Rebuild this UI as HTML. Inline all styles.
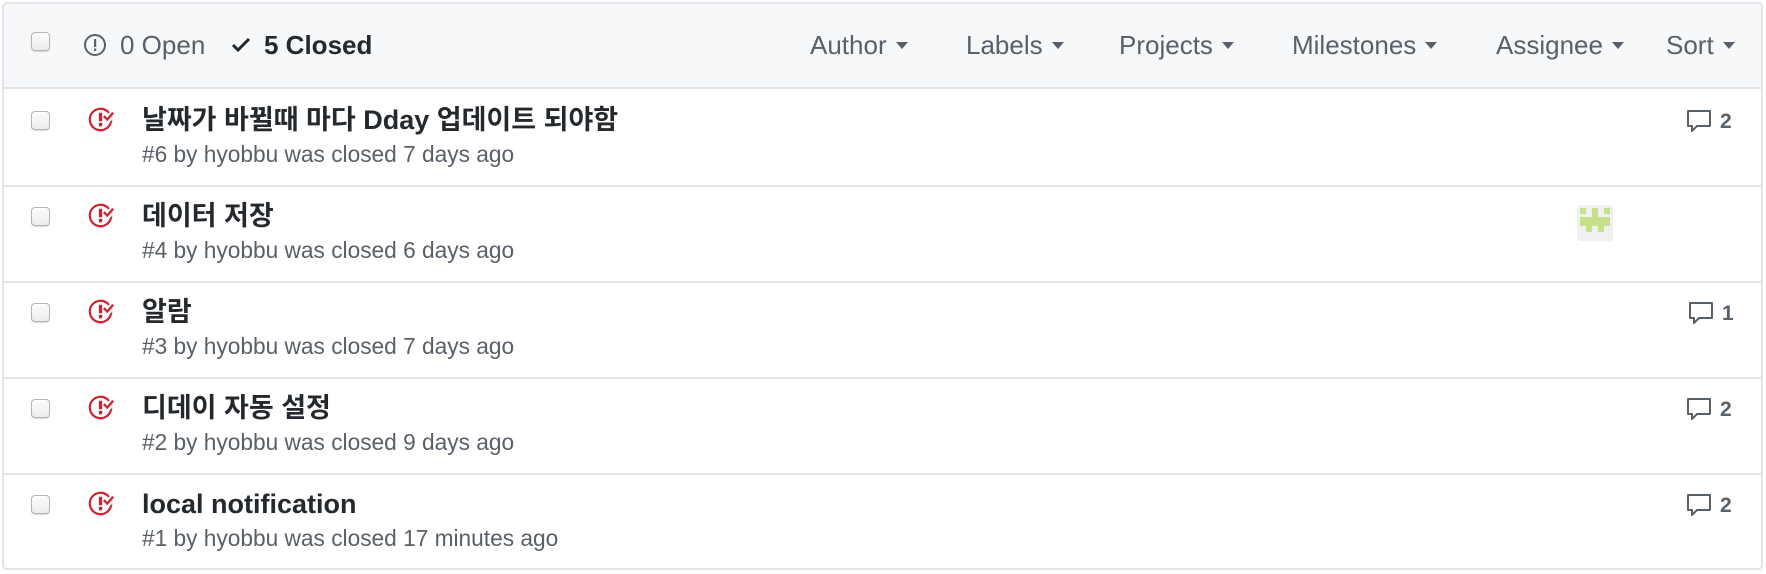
<!DOCTYPE html>
<html><head><meta charset="utf-8"><style>
*{box-sizing:border-box;margin:0;padding:0}
body{width:1766px;height:574px;background:#fff;font-family:"Liberation Sans","Noto Sans CJK KR",sans-serif;color:#24292e;overflow:hidden}
.box{position:absolute;left:2px;top:2px;width:1761px;height:568px;border:2px solid #e1e4e8;border-radius:5px;overflow:hidden}
.hdr{position:absolute;left:0;top:0;right:0;height:85px;background:#f6f8fa;border-bottom:2px solid #e1e4e8}
.cb{position:absolute;width:19px;height:19px;border:1px solid #b5b5b5;border-radius:4px;background:linear-gradient(#fdfdfd,#ececec);box-shadow:0 1px 1px rgba(0,0,0,.15)}
.t{position:absolute;white-space:nowrap}
.f{font-size:26px;line-height:30px;color:#586069}
.f:after{content:"";display:inline-block;margin-left:9px;vertical-align:middle;border:6px solid transparent;border-top:7px solid #586069;border-bottom:0;position:relative;top:-2px}
.row{position:absolute;left:0;right:0;height:96px;border-bottom:2px solid #e1e4e8}
.title{font-size:27px;line-height:30px;font-weight:bold;left:138px;top:14px}
.meta{font-size:22.7px;line-height:26px;color:#586069;left:138px;top:50px}
.ic{position:absolute;left:83px;top:15px}
.cm{position:absolute;top:18px;left:1682px;font-size:21px;line-height:26px;font-weight:bold;color:#586069}
.cm svg{vertical-align:-5px;margin-right:8px}
</style></head><body>
<div class="box">
<div class="hdr">
 <div class="cb" style="left:27px;top:28px"></div>
 <svg style="position:absolute;left:79px;top:29px" width="24" height="24" viewBox="0 0 24 24"><circle cx="12" cy="12" r="10" fill="none" stroke="#586069" stroke-width="2"/><rect x="11" y="6" width="2.2" height="8" fill="#586069"/><rect x="11" y="15.5" width="2.2" height="2.4" fill="#586069"/></svg>
 <div class="t" style="left:116px;top:26px;font-size:26px;line-height:30px;color:#586069">0 Open</div>
 <svg style="position:absolute;left:227px;top:32px" width="20" height="18" viewBox="0 0 20 18"><path d="M2 9l5 5L18 3" fill="none" stroke="#24292e" stroke-width="3"/></svg>
 <div class="t" style="left:260px;top:26px;font-size:26px;line-height:30px;font-weight:bold">5 Closed</div>
 <div class="t f" style="left:806px;top:26px">Author</div>
 <div class="t f" style="left:962px;top:26px">Labels</div>
 <div class="t f" style="left:1115px;top:26px">Projects</div>
 <div class="t f" style="left:1288px;top:26px">Milestones</div>
 <div class="t f" style="left:1492px;top:26px">Assignee</div>
 <div class="t f" style="left:1662px;top:26px">Sort</div>
</div>

<div class="row" style="top:87px">
 <div class="cb" style="left:27px;top:20px"></div>
 <svg class="ic" width="27" height="27" viewBox="0 0 16 16"><path fill="#cb2431" d="M7 10h2v2H7v-2zm2-6H7v5h2V4zm1.5 1.5l-1 1L12 9l4-4.5-1-1L12 7l-1.5-1.5zM8 13.7A5.710 5.710 0 0 1 2.3 8c0-3.14 2.56-5.7 5.7-5.7 1.83 0 3.45.88 4.5 2.2l.92-.92A6.947 6.947 0 0 0 8 1C4.14 1 1 4.14 1 8s3.14 7 7 7 7-3.14 7-7l-1.52 1.52c-.66 2.41-2.86 4.19-5.48 4.19v-.01z"/></svg>
 <div class="t title">날짜가 바뀔때 마다 Dday 업데이트 되야함</div>
 <div class="t meta">#6 by hyobbu was closed 7 days ago</div>
 <div class="cm"><svg width="26" height="24" viewBox="0 0 26 24"><path d="M2 2h22v15H11l-5 5v-5H2z" fill="none" stroke="#586069" stroke-width="2" stroke-linejoin="round"/></svg>2</div>
</div>

<div class="row" style="top:183px">
 <div class="cb" style="left:27px;top:20px"></div>
 <svg class="ic" width="27" height="27" viewBox="0 0 16 16"><path fill="#cb2431" d="M7 10h2v2H7v-2zm2-6H7v5h2V4zm1.5 1.5l-1 1L12 9l4-4.5-1-1L12 7l-1.5-1.5zM8 13.7A5.710 5.710 0 0 1 2.3 8c0-3.14 2.56-5.7 5.7-5.7 1.83 0 3.45.88 4.5 2.2l.92-.92A6.947 6.947 0 0 0 8 1C4.14 1 1 4.14 1 8s3.14 7 7 7 7-3.14 7-7l-1.52 1.52c-.66 2.41-2.86 4.19-5.48 4.19v-.01z"/></svg>
 <div class="t title">데이터 저장</div>
 <div class="t meta">#4 by hyobbu was closed 6 days ago</div>
 <svg style="position:absolute;left:1573px;top:18px" width="36" height="36" viewBox="0 0 36 36"><rect width="36" height="36" rx="3" fill="#f0f0f0"/><g fill="#c6e08a"><rect x="3" y="3" width="6" height="6"/><rect x="27" y="3" width="6" height="6"/><rect x="15" y="3" width="6" height="9"/><rect x="3" y="12" width="30" height="9"/><rect x="9" y="21" width="6" height="6"/><rect x="21" y="21" width="6" height="6"/></g></svg>
</div>

<div class="row" style="top:279px">
 <div class="cb" style="left:27px;top:20px"></div>
 <svg class="ic" width="27" height="27" viewBox="0 0 16 16"><path fill="#cb2431" d="M7 10h2v2H7v-2zm2-6H7v5h2V4zm1.5 1.5l-1 1L12 9l4-4.5-1-1L12 7l-1.5-1.5zM8 13.7A5.710 5.710 0 0 1 2.3 8c0-3.14 2.56-5.7 5.7-5.7 1.83 0 3.45.88 4.5 2.2l.92-.92A6.947 6.947 0 0 0 8 1C4.14 1 1 4.14 1 8s3.14 7 7 7 7-3.14 7-7l-1.52 1.52c-.66 2.41-2.86 4.19-5.48 4.19v-.01z"/></svg>
 <div class="t title">알람</div>
 <div class="t meta">#3 by hyobbu was closed 7 days ago</div>
 <div class="cm" style="left:1684px"><svg width="26" height="24" viewBox="0 0 26 24"><path d="M2 2h22v15H11l-5 5v-5H2z" fill="none" stroke="#586069" stroke-width="2" stroke-linejoin="round"/></svg>1</div>
</div>

<div class="row" style="top:375px">
 <div class="cb" style="left:27px;top:20px"></div>
 <svg class="ic" width="27" height="27" viewBox="0 0 16 16"><path fill="#cb2431" d="M7 10h2v2H7v-2zm2-6H7v5h2V4zm1.5 1.5l-1 1L12 9l4-4.5-1-1L12 7l-1.5-1.5zM8 13.7A5.710 5.710 0 0 1 2.3 8c0-3.14 2.56-5.7 5.7-5.7 1.83 0 3.45.88 4.5 2.2l.92-.92A6.947 6.947 0 0 0 8 1C4.14 1 1 4.14 1 8s3.14 7 7 7 7-3.14 7-7l-1.52 1.52c-.66 2.41-2.86 4.19-5.48 4.19v-.01z"/></svg>
 <div class="t title">디데이 자동 설정</div>
 <div class="t meta">#2 by hyobbu was closed 9 days ago</div>
 <div class="cm"><svg width="26" height="24" viewBox="0 0 26 24"><path d="M2 2h22v15H11l-5 5v-5H2z" fill="none" stroke="#586069" stroke-width="2" stroke-linejoin="round"/></svg>2</div>
</div>

<div class="row" style="top:471px;border-bottom:0">
 <div class="cb" style="left:27px;top:20px"></div>
 <svg class="ic" width="27" height="27" viewBox="0 0 16 16"><path fill="#cb2431" d="M7 10h2v2H7v-2zm2-6H7v5h2V4zm1.5 1.5l-1 1L12 9l4-4.5-1-1L12 7l-1.5-1.5zM8 13.7A5.710 5.710 0 0 1 2.3 8c0-3.14 2.56-5.7 5.7-5.7 1.83 0 3.45.88 4.5 2.2l.92-.92A6.947 6.947 0 0 0 8 1C4.14 1 1 4.14 1 8s3.14 7 7 7 7-3.14 7-7l-1.52 1.52c-.66 2.41-2.86 4.19-5.48 4.19v-.01z"/></svg>
 <div class="t title">local notification</div>
 <div class="t meta">#1 by hyobbu was closed 17 minutes ago</div>
 <div class="cm"><svg width="26" height="24" viewBox="0 0 26 24"><path d="M2 2h22v15H11l-5 5v-5H2z" fill="none" stroke="#586069" stroke-width="2" stroke-linejoin="round"/></svg>2</div>
</div>
</div>
</body></html>
